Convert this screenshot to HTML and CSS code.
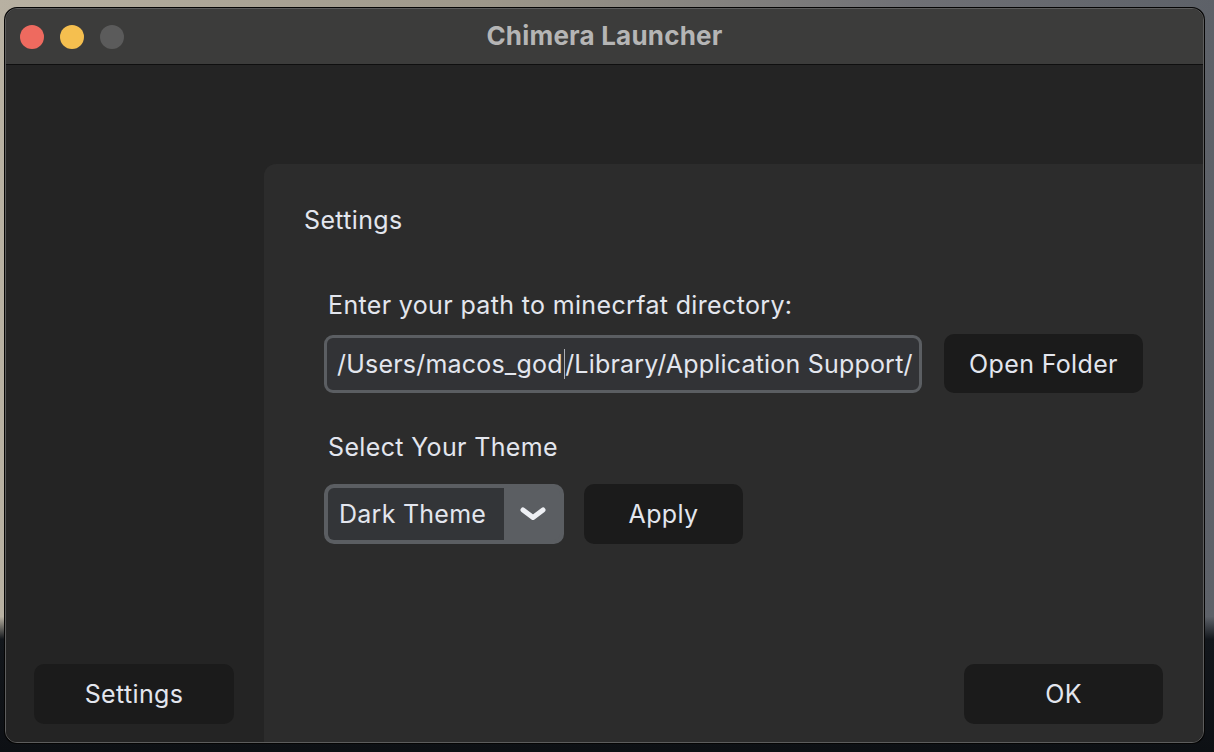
FILE: index.html
```html
<!DOCTYPE html>
<html>
<head>
<meta charset="utf-8">
<title>Chimera Launcher</title>
<link rel="stylesheet" href="styles.css">
</head>
<body>
<div class="window">
  <header class="titlebar">
    <div class="lights">
      <span class="light red"></span>
      <span class="light yellow"></span>
      <span class="light grey"></span>
    </div>
    <div class="title">Chimera Launcher</div>
    <div class="spacer"></div>
  </header>
  <div class="main">
    <aside class="sidebar">
      <button class="btn side-btn">Settings</button>
    </aside>
    <section class="panel">
      <h1 class="heading">Settings</h1>
      <div class="form">
        <div class="label first">Enter your path to minecrfat directory:</div>
        <div class="row">
          <div class="field"><span class="seg">/Users/macos_god</span><span class="caret"></span><span class="seg">/Library/Application Support/</span></div>
          <button class="btn folder-btn">Open Folder</button>
        </div>
        <div class="label second">Select Your Theme</div>
        <div class="row row2">
          <div class="combo">
            <div class="combo-text">Dark Theme</div>
            <div class="combo-arrow">
              <svg width="28" height="16" viewBox="0 0 28 16"><path d="M4 4 L14 11.5 L24 4" fill="none" stroke="#eef0f4" stroke-width="5" stroke-linecap="round" stroke-linejoin="round"/></svg>
            </div>
          </div>
          <button class="btn apply-btn">Apply</button>
        </div>
      </div>
      <button class="btn ok-btn">OK</button>
    </section>
  </div>
</div>
</body>
</html>
```

FILE: styles.css
```css
* { box-sizing: border-box; }
html, body { margin: 0; padding: 0; }
body {
  width: 1214px;
  height: 752px;
  overflow: hidden;
  font-family: Inter, "Noto Sans", sans-serif;
  background:
    linear-gradient(to bottom, rgba(0,0,0,0) 0%, rgba(0,0,0,0) 82%, #13171c 85%, #0d1014 100%),
    linear-gradient(to right, #b8b1a2 0%, #9d978a 40%, #6f7075 75%, #5d6168 100%);
  padding: 8px 0 0 5px;
}
.window {
  width: 1199px;
  height: 735px;
  border-radius: 12px;
  border: 1px solid #5d5d5d;
  box-shadow: 0 0 0 1px #050505;
  overflow: hidden;
  display: flex;
  flex-direction: column;
  background: #242424;
}
.titlebar {
  height: 56px;
  flex: none;
  background: #3c3c3b;
  border-bottom: 1px solid #0f0f0f;
  display: grid;
  grid-template-columns: 1fr auto 1fr;
  align-items: center;
  padding-left: 14px;
}
.lights { display: flex; gap: 16px; }
.light { width: 24px; height: 24px; border-radius: 50%; display: block; }
.red { background: #ee6a5f; }
.yellow { background: #f5bf4f; }
.grey { background: #5b5b5b; }
.title {
  font-weight: 700;
  font-size: 26px;
  letter-spacing: 0.2px;
  color: #b5b5b5;
  margin-left: -14px;
  padding-bottom: 2px;
}
.main { flex: 1; display: flex; min-height: 0; }
.sidebar {
  width: 258px;
  flex: none;
  background: #242424;
  display: flex;
  flex-direction: column;
  justify-content: flex-end;
  padding: 0 0 18px 28px;
}
.btn {
  border: none;
  background: #1b1b1b;
  color: #e3e6ee;
  font-family: Inter, "Noto Sans", sans-serif;
  font-size: 25px;
  letter-spacing: 0.35px;
  border-radius: 10px;
  padding: 0;
  height: 60px;
}
.side-btn { width: 200px; }
.panel {
  flex: 1;
  margin-top: 99px;
  background: #2c2c2c;
  border-top-left-radius: 12px;
  display: flex;
  flex-direction: column;
  padding: 41px 40px 18px 40px;
}
.heading {
  margin: 0;
  font-weight: 400;
  font-size: 25px;
  letter-spacing: 0.35px;
  line-height: 30px;
  color: #e3e6ee;
}
.form { padding-left: 20px; }
.label {
  font-size: 25px;
  letter-spacing: 0.35px;
  line-height: 30px;
  color: #e3e6ee;
  padding-left: 4px;
}
.label.first { margin-top: 55px; }
.label.second { margin-top: 39px; }
.row { display: flex; align-items: center; gap: 22px; margin-top: 14px; }
.row2 { gap: 20px; margin-top: 22px; }
.field {
  width: 598px;
  height: 58px;
  border: 3px solid #5b5e62;
  background: #323336;
  border-radius: 9px;
  padding-left: 10px;
  font-size: 25px;
  letter-spacing: 0.2px;
  color: #e3e6ee;
  white-space: nowrap;
  overflow: hidden;
  display: flex;
  align-items: center;
}
.seg { flex: none; }
.caret {
  flex: none;
  width: 1.5px;
  height: 30px;
  margin-left: 1px;
  background: #aeb0b6;
}
.folder-btn { width: 199px; height: 59px; }
.combo {
  width: 240px;
  height: 60px;
  border: 4px solid #5b5e62;
  border-radius: 10px;
  background: #5b5e62;
  display: flex;
}
.combo-text {
  width: 176px;
  background: #333538;
  border-radius: 6px 0 0 6px;
  font-size: 25px;
  letter-spacing: 0.25px;
  color: #e3e6ee;
  line-height: 52px;
  padding-left: 11px;
}
.combo-arrow {
  flex: 1;
  display: flex;
  align-items: center;
  justify-content: center;
  padding-left: 2px;
}
.apply-btn { width: 159px; }
.ok-btn { width: 199px; margin-top: auto; align-self: flex-end; }
```
